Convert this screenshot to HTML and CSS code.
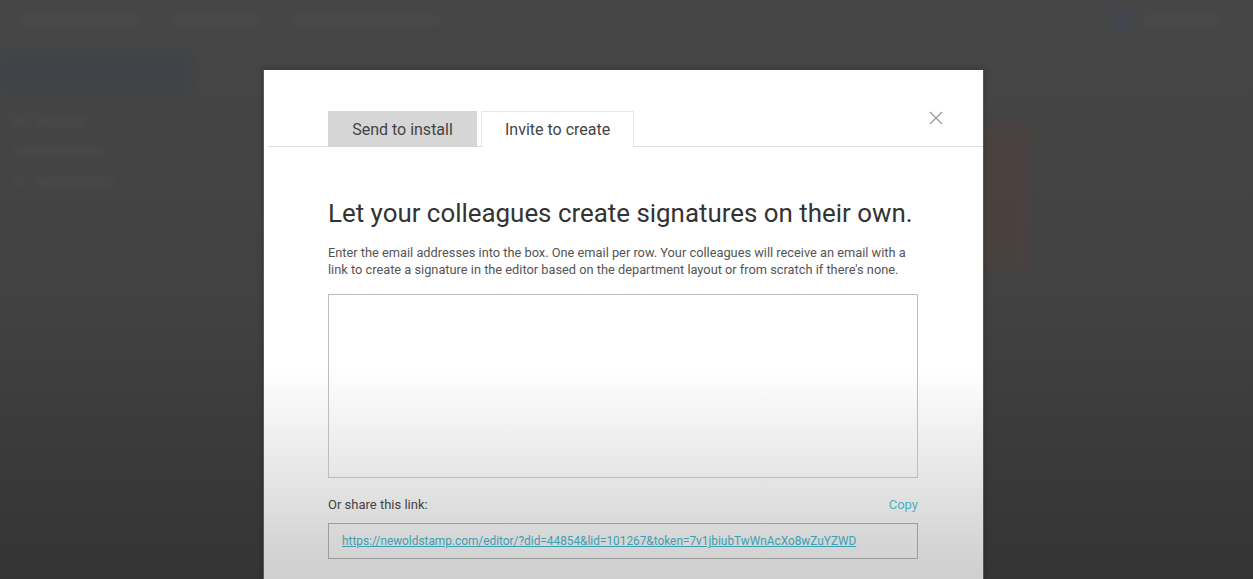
FILE: index.html
```html
<!DOCTYPE html>
<html lang="en">
<head>
<meta charset="utf-8">
<title>Invite to create</title>
<link rel="stylesheet" href="styles.css">
</head>
<body>
<div class="backdrop">
  <div class="bg-top">
    <div class="bg-crumbs">
      <span class="ghost w120"></span><span class="ghost w90"></span><span class="ghost w150"></span>
    </div>
    <div class="bg-user"><span class="bg-avatar"></span><span class="ghost w80"></span></div>
  </div>
  <div class="bg-main">
    <aside class="bg-side">
      <div class="bg-btn"></div>
      <div class="bg-nav"><span class="ghost-ico"></span><span class="ghost w50"></span></div>
      <div class="bg-nav"><span class="ghost w90"></span></div>
      <div class="bg-nav"><span class="ghost-ico"></span><span class="ghost w80"></span></div>
    </aside>
    <div class="bg-content">
      <div class="bg-card"></div>
    </div>
  </div>
</div>

<div class="modal">
  <div class="modal-head">
    <div class="tabs">
      <button class="tab tab-active">Send to install</button>
      <button class="tab">Invite to create</button>
    </div>
    <button class="close" aria-label="Close">
      <svg width="14" height="14" viewBox="0 0 14 14"><path d="M1 1L13 13M13 1L1 13" stroke="#9a9a9a" stroke-width="1.3" fill="none"/></svg>
    </button>
  </div>
  <div class="modal-body">
    <h1 class="title">Let your colleagues create signatures on their own.</h1>
    <p class="desc">Enter the email addresses into the box. One email per row. Your colleagues will receive an email with a link to create a signature in the editor based on the department layout or from scratch if there's none.</p>
    <textarea class="emails"></textarea>
    <div class="share-row">
      <span class="share-label">Or share this link:</span>
      <a class="copy" href="#">Copy</a>
    </div>
    <div class="link-box">
      <a class="link" href="#">https://newoldstamp.com/editor/?did=44854&amp;lid=101267&amp;token=7v1jbiubTwWnAcXo8wZuYZWD</a>
    </div>
  </div>
</div>
</body>
</html>
```

FILE: styles.css
```css
html, body {
  margin: 0;
  padding: 0;
  height: 100%;
  overflow: hidden;
}
body {
  font-family: Roboto, "Liberation Sans", Arial, sans-serif;
  background: linear-gradient(180deg, #464646 0%, #424242 50%, #343434 100%);
  position: relative;
}
.backdrop {
  height: 100%;
  display: flex;
  flex-direction: column;
  filter: blur(4px);
  opacity: 0.3;
}
.bg-top {
  height: 40px;
  display: flex;
  justify-content: space-between;
  align-items: center;
  padding: 0 30px 0 20px;
}
.bg-crumbs { display: flex; gap: 30px; }
.ghost {
  display: inline-block;
  height: 7px;
  border-radius: 3px;
  background: #5a5a5a;
}
.w50 { width: 50px; }
.w80 { width: 80px; }
.w90 { width: 90px; }
.w120 { width: 120px; }
.w150 { width: 150px; }
.bg-user { display: flex; align-items: center; gap: 10px; }
.bg-avatar {
  width: 24px; height: 24px; border-radius: 50%;
  background: #3e4560;
}
.bg-main { display: flex; flex: 1; }
.bg-side {
  width: 200px;
  padding-top: 10px;
  display: flex;
  flex-direction: column;
  gap: 22px;
}
.bg-btn {
  height: 44px;
  width: 190px;
  border-radius: 4px;
  background: #34404e;
}
.bg-nav {
  display: flex; align-items: center; gap: 10px;
  padding-left: 14px;
}
.ghost-ico { width: 12px; height: 10px; background: #555; border-radius: 2px; }
.bg-content { flex: 1; position: relative; }
.bg-card {
  margin: 85px 0 0 780px;
  width: 48px;
  height: 145px;
  background: #5a3f38;
  border-radius: 3px;
}

.modal {
  position: absolute;
  left: 264px;
  top: 70px;
  width: 719px;
  height: 560px;
  background: linear-gradient(180deg, #ffffff 0%, #ffffff 53%, #ececec 68%, #d6d6d6 84%, #c6c6c6 100%);
  box-shadow: -1px 0 0 #5a5a5a, 1px 0 0 #555, 0 0 6px rgba(0,0,0,0.35);
  box-sizing: border-box;
}
.modal-head {
  height: 77px;
  border-bottom: 1px solid #dedede;
  margin-left: 4px;
  box-sizing: border-box;
  display: flex;
  align-items: flex-end;
  justify-content: space-between;
  padding: 0 38px 0 60px;
  position: relative;
}
.tabs { display: flex; gap: 4px; }
.tab {
  font-family: Roboto, "Liberation Sans", Arial, sans-serif;
  font-size: 16px;
  color: #444;
  background: #fff;
  border: 1px solid #e6e6e6;
  border-bottom: none;
  height: 36px;
  padding: 0 23px;
  margin-bottom: -1px;
  cursor: pointer;
}
.tab-active {
  background: #d6d6d6;
  border-color: #d6d6d6;
  width: 149px;
  padding: 0;
}
.close {
  position: absolute;
  right: 40px;
  top: 41px;
  background: none;
  border: none;
  padding: 0;
  width: 14px;
  height: 14px;
  cursor: pointer;
}
.close svg { display: block; }
.modal-body {
  padding: 50px 65px 0 64px;
}
.title {
  margin: 0;
  font-size: 25.9px;
  font-weight: 400;
  color: #333;
  line-height: 32px;
  letter-spacing: 0;
}
.desc {
  margin: 15px 0 0;
  font-size: 12.8px;
  line-height: 17px;
  color: #555;
}
.emails {
  display: block;
  margin-top: 16px;
  width: 100%;
  height: 184px;
  box-sizing: border-box;
  border: 1px solid #bdbdbd;
  background: transparent;
  resize: none;
}
.share-row {
  margin-top: 18px;
  display: flex;
  justify-content: space-between;
  align-items: center;
  font-size: 13px;
  line-height: 18px;
}
.share-label { color: #444; }
.copy { color: #4fb0bf; text-decoration: none; }
.link-box {
  margin-top: 9px;
  height: 36px;
  border: 1px solid #9c9c9c;
  box-sizing: border-box;
  display: flex;
  align-items: center;
  padding-left: 13px;
}
.link {
  font-size: 11.85px;
  color: #3c9fb2;
  text-decoration: underline;
}
```
